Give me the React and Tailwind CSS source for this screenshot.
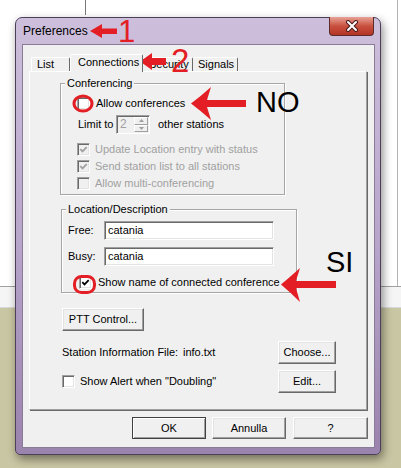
const Check = ({ checked, disabled }) => (
  <span className={`w-[13px] h-[13px] shrink-0 flex items-center justify-center border border-t-[#a0a0a0] border-l-[#a0a0a0] border-r-white border-b-white shadow-[inset_1px_1px_0_#696969,inset_-1px_-1px_0_#e3e3e3] ${disabled ? 'bg-[#f0f0f0]' : 'bg-white'}`}>
    {checked && (
      <svg width="9" height="9" viewBox="0 0 9 9">
        <path d="M1.3 4.2 L3.5 6.4 L7.7 2.1" fill="none" stroke={disabled ? '#a0a0a0' : '#000'} strokeWidth="1.8" />
      </svg>
    )}
  </span>
)

const Field = ({ value }) => (
  <div className="w-[170px] h-[19px] bg-white border border-t-[#a0a0a0] border-l-[#a0a0a0] border-r-white border-b-white shadow-[inset_1px_1px_0_#696969,inset_-1px_-1px_0_#e3e3e3] px-[3px] flex items-center">{value}</div>
)

const Btn = ({ children, className }) => (
  <div className={`flex items-center justify-center bg-[#f0f0f0] border border-t-white border-l-white border-r-[#696969] border-b-[#696969] shadow-[inset_-1px_-1px_0_#a0a0a0,inset_1px_1px_0_#e3e3e3] ${className}`}>{children}</div>
)

const Group = ({ label, className, children }) => (
  <div className={`border border-[#a6a6a6] shadow-[1px_1px_0_white,inset_1px_1px_0_white] ${className}`}>
    <div className="-mt-[7px] ml-[4px] w-fit px-[2px] bg-[#f0f0f0] leading-[13px]">{label}</div>
    {children}
  </div>
)

const App = () => {
  return (
    <div className="relative w-[401px] h-[468px] overflow-hidden font-['Liberation_Sans',Arial,sans-serif] text-[11px] text-black">
      {/* desktop behind the window */}
      <div className="flex flex-col h-full">
        <div className="h-[286px] bg-white flex">
          <div className="ml-[85px] w-px h-[15px] bg-[#7a7a7a]" />
          <div className="ml-auto mr-[3px] w-px bg-[#b4b4b4]" />
        </div>
        <div className="h-[22px] bg-[#f5f5f5] border-t border-[#a0a0a0] border-b border-b-[#d8d8d8]" />
        <div className="flex-1 bg-[#c9c6a3]" />
      </div>

      {/* dialog */}
      <div className="absolute left-[15px] top-[17px] w-[366px] h-[438px] rounded-t-[7px] rounded-b-[5px] border border-[#4b3f5a] bg-linear-to-b from-[#cdbfdc] via-[#b9a6cb] to-[#9a83ad] shadow-[2px_4px_10px_rgba(0,0,0,0.45)] flex flex-col pl-[6px] pr-[5px] pb-[6px]">
        <div className="h-[26px] flex items-start">
          <div className="self-center pl-[1px] text-[12px]">Preferences</div>
          <div className="ml-auto mr-px -mt-px h-[19px] w-[45px] rounded-b-[4px] border border-t-0 border-[#5b2a2a] bg-linear-to-b from-[#e6a296] via-[#c9503f] to-[#b33424] flex items-center justify-center">
            <svg width="14" height="12" viewBox="0 0 14 12">
              <path d="M3 2 L11 10 M11 2 L3 10" stroke="#4a1a1a" strokeWidth="4" strokeLinecap="round" />
              <path d="M3 2 L11 10 M11 2 L3 10" stroke="#fff" strokeWidth="2" strokeLinecap="round" />
            </svg>
          </div>
        </div>

        <div className="flex-1 bg-[#f0f0f0] border border-[#8a7c99] px-[6px] pt-[9px] flex flex-col">
          {/* tabs */}
          <div className="h-[17px] flex items-end pl-[2px]">
            <div className="w-[39px] h-[14px] border-t border-l border-white border-r border-r-[#696969] rounded-t-[2px] pl-[5px] leading-[13px]">List</div>
            <div className="relative z-10 w-[73px] h-[18px] -mb-px bg-[#f0f0f0] border-t border-l border-white border-r border-r-[#696969] rounded-t-[2px] pl-[7px] leading-[15px]">Connections</div>
            <div className="w-[50px] h-[14px] border-t border-white border-r border-r-[#696969] rounded-t-[2px] pl-[6px] leading-[13px]">Security</div>
            <div className="w-[45px] h-[14px] border-t border-white border-r border-r-[#696969] rounded-t-[2px] pl-[5px] leading-[13px]">Signals</div>
          </div>

          {/* tab page */}
          <div className="w-[338px] h-[339px] border-t border-l border-white border-r border-b border-r-[#a0a0a0] border-b-[#a0a0a0] shadow-[1px_1px_0_#696969] pl-[30px] flex flex-col">
            <Group label="Conferencing" className="mt-[11px] w-[225px] pb-[4px]">
              <div className="mt-[7px] ml-[16px] flex items-center gap-[6px] leading-[13px]">
                <Check />
                <span>Allow conferences</span>
              </div>
              <div className="mt-[5px] ml-[17px] flex items-center h-[19px]">
                <span className="w-[38px]">Limit to</span>
                <div className="w-[34px] h-[19px] flex bg-[#f0f0f0] border border-t-[#a0a0a0] border-l-[#a0a0a0] border-r-white border-b-white shadow-[inset_1px_1px_0_#696969]">
                  <span className="flex-1 pl-[3px] pt-px text-[#a0a0a0] text-[12px] leading-[15px]">2</span>
                  <div className="w-[15px] flex flex-col pt-px pr-px pb-px">
                    <div className="flex-1 flex items-center justify-center border border-t-white border-l-white border-r-[#a0a0a0] border-b-[#a0a0a0]">
                      <svg width="5" height="3" viewBox="0 0 5 3"><path d="M0 3 L2.5 0 L5 3Z" fill="#a0a0a0" /></svg>
                    </div>
                    <div className="flex-1 flex items-center justify-center border border-t-white border-l-white border-r-[#a0a0a0] border-b-[#a0a0a0]">
                      <svg width="5" height="3" viewBox="0 0 5 3"><path d="M0 0 L2.5 3 L5 0Z" fill="#a0a0a0" /></svg>
                    </div>
                  </div>
                </div>
                <span className="ml-[8px]">other stations</span>
              </div>
              <div className="mt-[9px] ml-[16px] flex items-center gap-[5px] leading-[13px] text-[#a0a0a0]">
                <Check checked disabled />
                <span>Update Location entry with status</span>
              </div>
              <div className="mt-[4px] ml-[16px] flex items-center gap-[5px] leading-[13px] text-[#a0a0a0]">
                <Check checked disabled />
                <span>Send station list to all stations</span>
              </div>
              <div className="mt-[4px] ml-[16px] flex items-center gap-[5px] leading-[13px] text-[#a0a0a0]">
                <Check disabled />
                <span>Allow multi-conferencing</span>
              </div>
            </Group>

            <Group label="Location/Description" className="mt-[14px] ml-px w-[236px] pb-[3px]">
              <div className="mt-[5px] pl-[6px] flex items-center">
                <span className="w-[36px]">Free:</span>
                <Field value="catania" />
              </div>
              <div className="mt-[7px] pl-[6px] flex items-center">
                <span className="w-[36px]">Busy:</span>
                <Field value="catania" />
              </div>
              <div className="mt-[10px] pl-[17px] flex items-center gap-[6px] leading-[13px]">
                <Check checked />
                <span>Show name of connected conference</span>
              </div>
            </Group>

            <Btn className="mt-[15px] ml-[2px] w-[82px] h-[23px]">PTT Control...</Btn>

            <div className="mt-[10px] ml-[2px] w-[274px] h-[23px] flex items-center">
              <span className="w-[121px]">Station Information File:</span>
              <span>info.txt</span>
              <Btn className="ml-auto w-[58px] h-[23px]">Choose...</Btn>
            </div>

            <div className="mt-[6px] ml-[2px] w-[274px] h-[23px] flex items-center">
              <Check />
              <span className="ml-[5px]">Show Alert when "Doubling"</span>
              <Btn className="ml-auto w-[58px] h-[23px]">Edit...</Btn>
            </div>
          </div>

          {/* dialog buttons */}
          <div className="mt-[7px] flex justify-end">
            <div className="w-[74px] h-[22px] flex items-center justify-center bg-[#f0f0f0] border border-[#404040] shadow-[inset_1px_1px_0_white,inset_-1px_-1px_0_#a0a0a0]">OK</div>
            <Btn className="ml-[6px] w-[74px] h-[22px]">Annulla</Btn>
            <Btn className="ml-[7px] w-[75px] h-[22px]">?</Btn>
          </div>
        </div>
      </div>

      {/* red annotations */}
      <svg className="absolute inset-0 pointer-events-none" width="401" height="468" viewBox="0 0 401 468">
        <path d="M90 31 L102 24 L102 28.5 L117 28.5 L117 34 L102 34 L102 38 Z" fill="#e31e24" />
        <path d="M140 61.5 L152 53 L152 58 L166 58 L166 65 L152 65 L152 70 Z" fill="#e31e24" />
        <path d="M191 103.5 Q201 96 211 87 L207 100 L246 100 L246 107 L207 107 L211 120 Q201 111 191 103.5 Z" fill="#e31e24" />
        <path d="M281 284.5 Q290 277 300 268 L296 281 L336 281 L336 288 L296 288 L300 302 Q290 292 281 284.5 Z" fill="#e31e24" />
        <ellipse cx="83" cy="103.5" rx="9" ry="7.5" fill="none" stroke="#e31e24" strokeWidth="3" />
        <rect x="74.5" y="276.5" width="20" height="16" rx="7" fill="none" stroke="#e31e24" strokeWidth="3" />
      </svg>
      <span className="absolute left-[118px] top-[16px] text-[31px] leading-none text-[#e31e24]">1</span>
      <span className="absolute left-[171px] top-[44px] text-[33px] leading-none text-[#e31e24]">2</span>
      <span className="absolute left-[256px] top-[88px] text-[29px] leading-none">NO</span>
      <span className="absolute left-[326px] top-[248px] text-[29px] leading-none">SI</span>
    </div>
  )
}

export default App
